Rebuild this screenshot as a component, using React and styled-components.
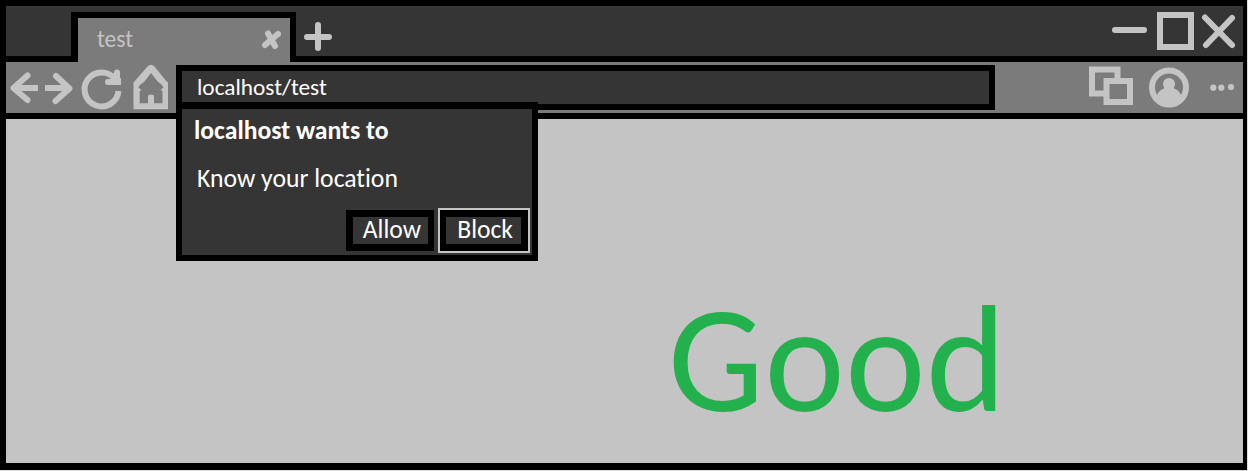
import React from 'react';
import styled, { createGlobalStyle } from 'styled-components';

const ink = '#000';
const dark = '#353535';
const mid = '#7b7b7b';
const light = '#c4c4c4';

const GlobalStyle = createGlobalStyle`
  * { box-sizing: border-box; }
  body {
    margin: 0;
    background: #dcdcdc;
    font-family: Carlito, Lato, "Liberation Sans", sans-serif;
    font-variant-ligatures: none;
    overflow: hidden;
  }
`;

const Window = styled.div`
  display: flex;
  flex-direction: column;
  width: 1247px;
  height: 470px;
  border: solid ${ink};
  border-width: 6px 4px 7px 6px;
  background: ${light};
`;

const TitleBar = styled.header`
  display: flex;
  flex: none;
  height: 56px;
  padding-left: 65px;
  background: ${dark};
  border-bottom: 6px solid ${ink};
`;

const Tab = styled.div`
  display: flex;
  justify-content: space-between;
  width: 225px;
  height: 50px;
  margin: 6px 0 -6px;
  padding: 0 6px 0 19px;
  background: ${mid};
  border: solid ${ink};
  border-width: 6px 6px 0 7px;
`;

const Label = styled.span`
  display: block;
  flex: none;
  white-space: nowrap;
  color: ${(p) => p.$color || '#fff'};
  font-size: ${(p) => p.$size}px;
  font-weight: ${(p) => (p.$bold ? 700 : 400)};
  line-height: ${(p) => p.$line}px;
  letter-spacing: ${(p) => p.$track || 0}px;
`;

const Icon = styled.svg`
  display: block;
  flex: none;
  fill: none;
  stroke: ${light};
  stroke-width: 6;
  stroke-linecap: round;
  stroke-linejoin: round;
`;

const WindowControls = styled.div`
  margin-left: auto;
`;

const Toolbar = styled.nav`
  position: relative;
  display: flex;
  flex: none;
  height: 57px;
  background: ${mid};
  border-bottom: 6px solid ${ink};
`;

const AddressBar = styled.div`
  width: 819px;
  height: 45px;
  margin-top: 3px;
  padding-left: 15px;
  background: ${dark};
  border: 6px solid ${ink};
`;

const Prompt = styled.section`
  position: absolute;
  z-index: 1;
  left: 170px;
  top: 40px;
  width: 362px;
  height: 159px;
  padding: 8px 1px 0 12px;
  background: ${dark};
  border: solid ${ink};
  border-width: 7px 6px 6px;
`;

const Message = styled.div`
  padding: 19px 0 0 3px;
`;

const Actions = styled.div`
  display: flex;
  justify-content: flex-end;
  align-items: center;
  gap: 6px;
  height: 47px;
  margin-top: 13px;
`;

const ChoiceButton = styled.button`
  display: flex;
  justify-content: flex-end;
  align-items: center;
  width: 88px;
  height: 41px;
  padding: 0 ${(p) => p.$inset}px 1px 0;
  background: ${dark};
  border: solid ${ink};
  border-width: ${(p) => (p.$focused ? '7px 7px 7px 6px' : '7px 6px 7px 7px')};
  font-family: inherit;
  font-variant-ligatures: inherit;
  outline: ${(p) => (p.$focused ? `2.5px solid ${light}` : 'none')};
  margin-right: ${(p) => (p.$focused ? 3 : 0)}px;
`;

const Page = styled.main`
  flex: 1;
  padding: 150px 0 0 662px;
`;

export default function App() {
  return (
    <>
      <GlobalStyle />
      <Window>
        <TitleBar>
          <Tab>
            <Label $size={23.5} $line={42} $color={light}>test</Label>
            <Icon width="24" height="40" viewBox="260 18 24 40">
              <path d="M265 45 278 34M268 33.5 275 46" />
            </Icon>
          </Tab>
          <Icon width="40" height="50" viewBox="296 6 40 50">
            <path d="M307 37H329M318 25V48" />
          </Icon>
          <WindowControls>
            <Icon width="143" height="50" viewBox="1100 6 143 50">
              <path d="M1115 30H1144" />
              <path d="M1160 15H1191V47H1160Z" strokeLinejoin="miter" />
              <path d="M1205 17.5 1232 45M1232 18 1206 45" />
            </Icon>
          </WindowControls>
        </TitleBar>
        <Toolbar>
          <Icon width="170" height="51" viewBox="6 62 170 51">
            <path d="M38 88H14" strokeLinecap="butt" />
            <path d="M27.5 75.5 13.5 88 27.5 100" />
            <path d="M45 88H68" strokeLinecap="butt" />
            <path d="M56 76 69.5 88.5 55.5 101" />
            <path d="M118.5 91A17 17 0 1 1 115 79" strokeLinecap="butt" />
            <path d="M117 72.5V82H108" strokeLinejoin="miter" />
            <path d="M114 79H118V85H121V78Z" fill={light} stroke="none" />
            <path
              d="M147.500 66.500Q151 63 154.500 66.500L167 82H168V109.300H133.500V82H134ZM151 73 144 82 141 84 138.300 87.300 141.500 90.300 139.700 91V103.300H148V96.500Q148 94.500 151 94.500T154 96.500V103.300H162.500V91L160.500 90.300 163.500 87.300 161 84 158 82Z"
              fill={light}
              fillRule="evenodd"
              stroke="none"
            />
          </Icon>
          <AddressBar>
            <Label $size={23.3} $line={33}>localhost/test</Label>
          </AddressBar>
          <Icon width="248" height="51" viewBox="995 62 248 51">
            <path d="M1106 93.5H1092V69.5H1117.5V79" strokeLinecap="butt" strokeLinejoin="miter" />
            <path d="M1106.5 81H1130V102H1106.5Z" strokeLinejoin="miter" />
            <circle cx="1169" cy="87.5" r="17" />
            <circle cx="1169" cy="84" r="6" fill={light} stroke="none" />
            <path d="M1156 98Q1158 90 1164 88.500V84H1174V88.500Q1180 90 1182 98L1169 106Z" fill={light} stroke="none" />
            <g fill={light} stroke="none">
              <circle cx="1213.3" cy="87.7" r="3.1" />
              <circle cx="1221.3" cy="87.7" r="3.1" />
              <circle cx="1231" cy="87" r="3.1" />
            </g>
          </Icon>
          <Prompt>
            <Label $size={25.7} $line={28} $bold>localhost wants to</Label>
            <Message>
              <Label $size={25.7} $line={30}>Know your location</Label>
            </Message>
            <Actions>
              <ChoiceButton $inset={7}>
                <Label $size={25.6} $line={26}>Allow</Label>
              </ChoiceButton>
              <ChoiceButton $focused $inset={8}>
                <Label $size={25.6} $line={26}>Block</Label>
              </ChoiceButton>
            </Actions>
          </Prompt>
        </Toolbar>
        <Page>
          <Label $size={152} $line={180} $track={0.6} $color="#22b14c">Good</Label>
        </Page>
      </Window>
    </>
  );
}
